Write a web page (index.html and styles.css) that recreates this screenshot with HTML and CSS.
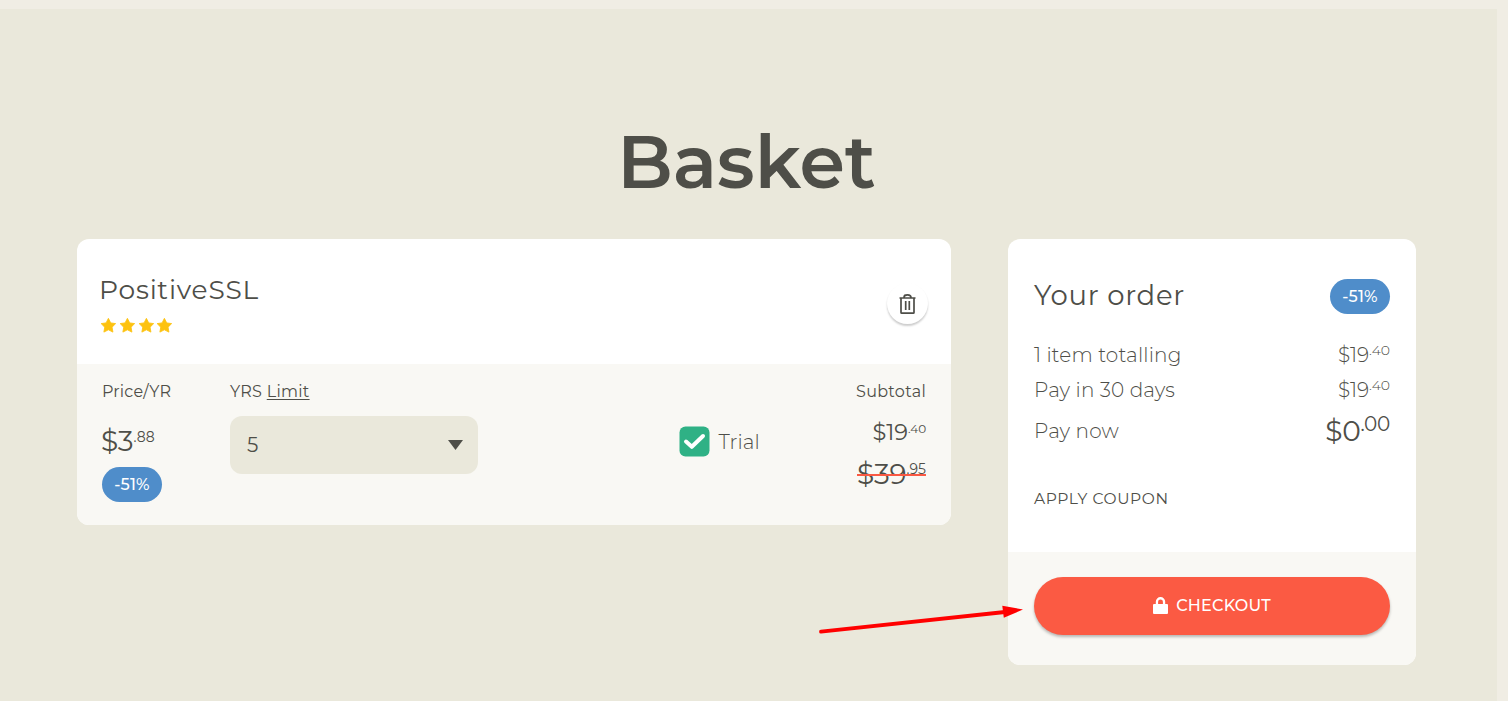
FILE: index.html
```html
<!DOCTYPE html>
<html lang="en">
<head>
<meta charset="utf-8">
<title>Basket</title>
<link rel="stylesheet" href="styles.css">
</head>
<body>
<main class="page">
  <h1 class="title">Basket</h1>
  <div class="columns">
    <section class="card item">
      <div class="item-head">
        <div class="item-info">
          <h2 class="product">PositiveSSL</h2>
          <div class="stars">
            <svg viewBox="0 0 16 16"><path d="M8 1.300l2.200 4.300 4.700.7-3.400 3.400.8 4.700L8 12.200l-4.300 2.200.8-4.700L1.100 6.300l4.700-.7z"/></svg>
            <svg viewBox="0 0 16 16"><path d="M8 1.300l2.200 4.300 4.700.7-3.400 3.400.8 4.700L8 12.200l-4.300 2.200.8-4.700L1.100 6.300l4.700-.7z"/></svg>
            <svg viewBox="0 0 16 16"><path d="M8 1.300l2.200 4.300 4.700.7-3.400 3.400.8 4.700L8 12.200l-4.300 2.200.8-4.700L1.100 6.300l4.700-.7z"/></svg>
            <svg viewBox="0 0 16 16"><path d="M8 1.300l2.200 4.300 4.700.7-3.400 3.400.8 4.700L8 12.200l-4.300 2.200.8-4.700L1.100 6.300l4.700-.7z"/></svg>
          </div>
        </div>
        <button class="remove" aria-label="Remove">
          <svg viewBox="0 0 18 22" width="18" height="22"><path d="M.5 5h16M5 4.500C5 2.200 6 1.800 8.500 1.800s3.500.4 3.500 2.700M2 5v14.500q0 .7.700.7h11.600q.7 0 .7-.7V5M6.700 8v9M10.300 8v9"/></svg>
        </button>
      </div>
      <div class="item-body">
        <div class="col-price">
          <div class="label label-price">Price/YR</div>
          <div class="price price-unit">$3<sup>.88</sup></div>
          <span class="badge">-51%</span>
        </div>
        <div class="col-years">
          <div class="label label-years">YRS <a class="limit">Limit</a></div>
          <div class="select"><span>5</span><svg viewBox="0 0 15 10" width="15" height="10"><path d="M0 0h15L7.500 10z"/></svg></div>
        </div>
        <div class="col-trial">
          <svg class="check" viewBox="0 0 31 31" width="31" height="31"><rect x=".5" y=".5" width="30" height="30" rx="6"/><path d="M7 15.500l5.800 5.300L24 10"/></svg>
          <span class="trial">Trial</span>
        </div>
        <div class="col-subtotal">
          <div class="label label-subtotal">Subtotal</div>
          <div class="price price-now">$19<sup>.40</sup></div>
          <div class="price price-old">$39<sup>.95</sup></div>
        </div>
      </div>
    </section>

    <aside class="card order">
      <div class="order-main">
        <div class="order-head"><h2 class="order-title">Your order</h2><span class="badge">-51%</span></div>
        <div class="row"><span class="row-items">1 item totalling</span><span class="price price-row">$19<sup>.40</sup></span></div>
        <div class="row"><span class="row-days">Pay in 30 days</span><span class="price price-row">$19<sup>.40</sup></span></div>
        <div class="row row-total"><span class="row-now">Pay now</span><span class="price price-total">$0<sup>.00</sup></span></div>
        <a class="coupon">APPLY COUPON</a>
      </div>
      <div class="order-foot">
        <button class="checkout">
          <svg viewBox="0 0 15 17" width="15" height="17"><path fill-rule="evenodd" d="M1 7h1.800V4.800a4.700 4.700 0 0 1 9.400 0V7H14q1 0 1 1v8q0 1-1 1H1q-1 0-1-1V8q0-1 1-1zM5.100 7h4.800V4.800a2.400 2.400 0 0 0-4.800 0z"/></svg>
          <span>CHECKOUT</span>
        </button>
      </div>
    </aside>
  </div>
  <svg class="arrow" viewBox="0 0 210 40" width="210" height="40"><path class="shaft" d="M6 27.700L190 8"/><path class="tip" d="M187.300 1.800L208 5.500 188.800 13.700z"/></svg>
</main>
</body>
</html>
```
FILE: styles.css
```css
* { box-sizing: border-box; }
body {
  margin: 0;
  padding: 9px 11px 0 0;
  height: 701px;
  overflow: hidden;
  background: #f0ede4;
  color: #4e4e48;
  font-family: Montserrat, Inter, "Open Sans", sans-serif;
}
h1, h2 { margin: 0; }
button { border: 0; padding: 0; font-family: inherit; }
.page { position: relative; height: 692px; padding: 112px 81px 0 77px; background: #eae8db; }
.title { height: 80px; margin-bottom: 38px; font-size: 73px; line-height: 81px; font-weight: 600; text-align: center; }
.columns { display: flex; align-items: flex-start; gap: 57px; }
.card { border-radius: 12px; overflow: hidden; background: #fff; }

.item { width: 874px; height: 286px; }
.item-head { display: flex; justify-content: space-between; height: 125px; padding: 36px 23px 0 22px; }
.product { font-size: 26.500px; line-height: 30px; font-weight: 400; letter-spacing: 0.8px; }
.stars { display: flex; gap: 2px; margin: 12px 0 0 1px; }
.stars svg { display: block; width: 16.800px; height: 16.800px; fill: #fdc20f; stroke: #fdc20f; stroke-width: 0.8; stroke-linejoin: round; }
.remove { display: grid; place-items: center; width: 41px; height: 41px; margin-top: 8px; border-radius: 50%; background: #fff; box-shadow: 0 2px 2px #0003; }
.remove svg { fill: none; stroke: #4e4e48; stroke-width: 1.700; }

.item-body { display: flex; height: 161px; padding: 17px 25px 0; background: #f9f8f4; }
.label { height: 20px; font-size: 16px; line-height: 22px; white-space: nowrap; }
.label-price { letter-spacing: 0.2px; }
.label-years { letter-spacing: 0.3px; }
.label-subtotal { letter-spacing: 0.3px; }
.limit { text-decoration: underline; text-underline-offset: 2px; }
.price { display: flex; align-items: center; white-space: nowrap; }
.price sup { font-size: 14px; line-height: 1; vertical-align: baseline; }
.col-price { width: 128px; }
.price-unit { height: 30px; margin: 25px 0 11px -1px; font-size: 28px; letter-spacing: -0.2px; }
.price-unit sup { padding-bottom: 8px; letter-spacing: 0.2px; }
.badge { display: grid; place-items: center; width: 60px; height: 35px; border-radius: 18px; background: #4f8dca; color: #fff; font-size: 16px; font-weight: 500; letter-spacing: 0.2px; }
.col-years { width: 448.500px; }
.select { display: flex; align-items: center; justify-content: space-between; width: 248px; height: 58px; margin-top: 15px; padding: 0 15px 0 17px; border-radius: 12px; background: #eae8db; font-size: 20px; }
.select svg { fill: #4e4e48; }
.col-trial { display: flex; gap: 9px; height: 31px; margin-top: 45px; flex: 1; }
.check rect { fill: #2fb185; }
.check path { fill: none; stroke: #fff; stroke-width: 4; stroke-linecap: round; stroke-linejoin: round; }
.trial { font-size: 20px; font-weight: 300; line-height: 33px; letter-spacing: 0.1px; }
.col-subtotal { display: flex; flex-direction: column; align-items: flex-end; }
.price-now { height: 28px; margin: 17px 0 14px; font-size: 22.500px; letter-spacing: 0; }
.price-now sup { padding-bottom: 6px; font-size: 12px; letter-spacing: -0.1px; }
.price-old { height: 27px; font-size: 28px; letter-spacing: -0.1px; position: relative; }
.price-old::after { content: ""; position: absolute; left: 0; right: 0; top: 13.500px; height: 2px; background: #fa5943; }
.price-old sup { padding-bottom: 10px; letter-spacing: 0; }

.order { width: 408px; height: 426px; }
.order-main { height: 313px; padding: 40px 26px 0; }
.order-head { display: flex; justify-content: space-between; height: 35px; margin-bottom: 23px; }
.order-title { font-size: 27.500px; line-height: 33px; font-weight: 400; letter-spacing: 0.7px; }
.row { display: flex; justify-content: space-between; align-items: center; height: 35px; font-size: 20px; font-weight: 300; }
.row-items { letter-spacing: 0.150px; }
.row-days { letter-spacing: 0.15px; }
.row-now { letter-spacing: 0.15px; }
.row-total { height: 48px; }
.price-row sup { padding-bottom: 9px; }
.price-total { font-size: 28px; font-weight: 400; letter-spacing: -0.3px; }
.price-total sup { padding-bottom: 15px; font-size: 20px; }
.coupon { display: block; margin-top: 34px; font-size: 15.500px; line-height: 20px; letter-spacing: 0.6px; }
.order-foot { height: 113px; padding: 25px 26px 0; background: #f9f8f4; }
.checkout { display: flex; align-items: center; justify-content: center; gap: 8px; width: 356px; height: 58px; padding-bottom: 1px; border-radius: 29px; background: #fb5a43; color: #fff; font-size: 16px; font-weight: 500; letter-spacing: 0.25px; box-shadow: 0 2px 3px #0004; }
.checkout svg { fill: #fff; }
.arrow { position: absolute; left: 815px; top: 595px; }
.shaft { fill: none; stroke: #f00; stroke-width: 3.800; stroke-linecap: round; }
.tip { fill: #f00; }
```
